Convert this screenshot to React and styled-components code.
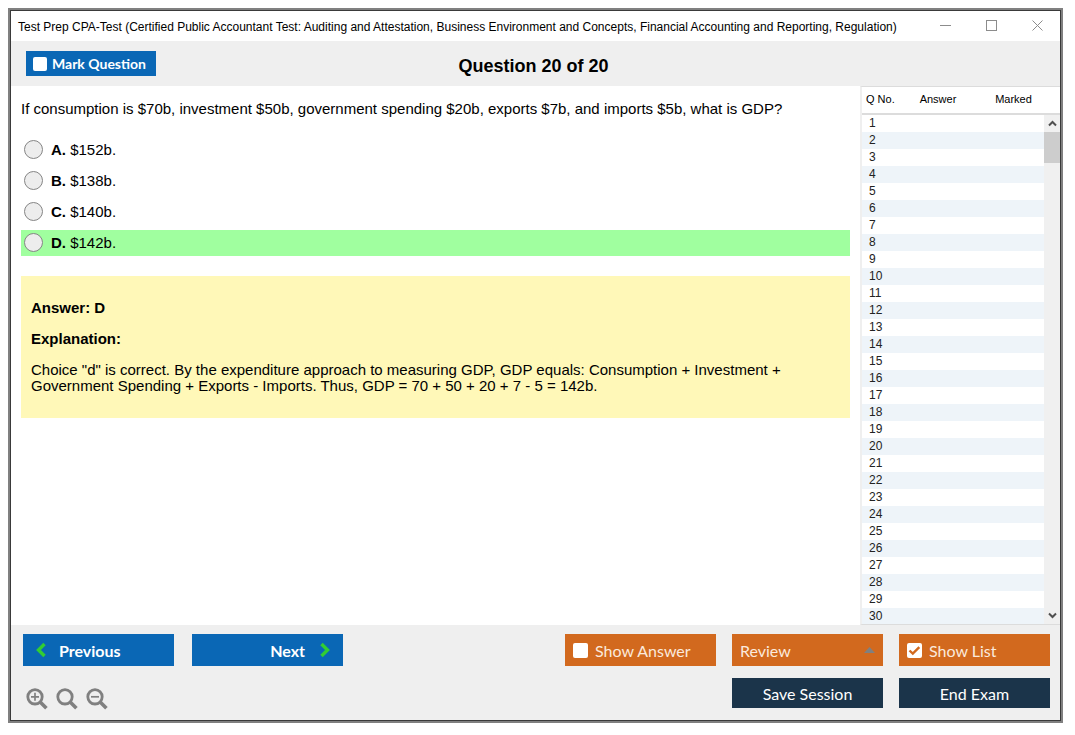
import React, { useState } from "react";
import styled, { createGlobalStyle } from "styled-components";

const GlobalStyle = createGlobalStyle`
  * {
    box-sizing: border-box;
  }

  body {
    margin: 0;
    padding: 8px 12px 12px 8px;
    background: #fff;
    color: #000;
    font-family: "Liberation Sans", Arial, sans-serif;
  }

  button, input {
    font: inherit;
    margin: 0;
  }
`;

const Window = styled.div`
  height: calc(100vh - 20px);
  display: flex;
  flex-direction: column;
  border: 2px solid #808080;
  outline: 1px solid #3a3a3a;
  outline-offset: -3px;
  padding: 1px;
  background: #efefef;
`;

const TitleBar = styled.header`
  flex: 0 0 30px;
  display: flex;
  align-items: center;
  justify-content: space-between;
  padding: 0 7px;
  background: #fff;
  font-size: 12px;
  line-height: 16px;
  white-space: nowrap;

  > span {
    padding-top: 2px;
  }
`;

const WindowControls = styled.div`
  display: flex;
  gap: 14px;

  button {
    width: 32px;
    height: 28px;
    padding: 0;
    border: 0;
    background: none;
  }

  svg {
    display: block;
    margin: 0 auto 2px;
  }
`;

const QuestionBar = styled.div`
  flex: 0 0 45px;
  display: grid;
  grid-template-columns: 1fr auto 1fr;
  align-items: center;
  padding: 0 19px 0 15px;

  h1 {
    margin: 0;
    padding-top: 4px;
    font-size: 18px;
    line-height: 20px;
  }
`;

const MarkLabel = styled.label`
  justify-self: start;
  display: flex;
  align-items: center;
  gap: 5px;
  width: 130px;
  height: 25px;
  padding: 0 7px;
  background: #0a67b5;
  color: #fff;
  font: bold 14px Lato, sans-serif;
  white-space: nowrap;
`;

const CheckBox = styled.span`
  display: grid;
  flex: none;
  width: ${props => props.$size}px;
  height: ${props => props.$size}px;

  input,
  svg {
    grid-area: 1 / 1;
    width: 100%;
    height: 100%;
  }

  input {
    appearance: none;
    border-radius: 2px;
    background: #fff;
  }

  svg {
    pointer-events: none;
  }
`;

const Main = styled.main`
  flex: 1;
  min-height: 0;
  display: flex;
  background: #fff;
`;

const QuestionPane = styled.section`
  flex: 1;
  padding: 15px 10px 0;
  font-size: 15px;
  line-height: 16px;

  > p {
    margin: 0 0 20px;
  }
`;

const Options = styled.div`
  display: flex;
  flex-direction: column;
  gap: 5px;
  margin-bottom: 20px;
`;

const Option = styled.label`
  display: flex;
  align-items: center;
  height: 26px;
  padding: 0 3px;
  background: ${props => (props.$correct ? "#a0ff9f" : "transparent")};

  input {
    appearance: none;
    width: 19px;
    height: 19px;
    margin: 0 8px 1px 0;
    border: 1px solid #858585;
    border-radius: 50%;
    background: #ededed;
  }

  input:checked {
    box-shadow: inset 0 0 0 4px #ededed;
    background: #333;
  }
`;

const Explanation = styled.div`
  padding: 24px 10px;
  background: #fff8b8;

  p {
    margin: 0 0 15px;
  }

  p:last-child {
    margin: 0;
  }
`;

const ListPane = styled.aside`
  flex: 0 0 200px;
  display: flex;
  border: 1px solid #dcdcdc;
  border-width: 1px 0;
  border-left: 2px solid #efefef;
  color: #222;
  font-size: 12px;
`;

const ListTable = styled.table`
  width: 100%;
  border-collapse: collapse;
  table-layout: fixed;

  th {
    height: 27px;
    padding: 0 0 2px;
    border-bottom: 2px solid #dcdcdc;
    font-size: 11px;
    font-weight: normal;
    color: #000;
  }

  th:first-child {
    width: 45px;
    padding-left: 4px;
    text-align: left;
  }

  th:nth-child(2) {
    width: 62px;
  }

  th:last-child {
    padding-left: 14px;
  }

  td {
    height: 17px;
    padding: 0 0 0 7px;
    line-height: 17px;
  }

  tbody tr:nth-child(even) {
    background: #eef4f9;
  }
`;

const Rows = styled.div`
  flex: 1;
  overflow: hidden;
`;

const ScrollTrack = styled.div`
  flex: 0 0 16px;
  display: flex;
  flex-direction: column;
  justify-content: space-between;
  margin-top: 26px;
  border-top: 2px solid #dcdcdc;
  background: #f0f0f0;

  button {
    display: block;
    width: 100%;
    height: 17px;
    padding: 0;
    border: 0;
    background: none;
  }

  svg {
    display: block;
    margin: auto;
  }
`;

const Thumb = styled.div`
  height: 31px;
  background: #cdcdcd;
`;

const Footer = styled.footer`
  flex: 0 0 95px;
  display: flex;
  justify-content: space-between;
  padding: 9px 10px 0 12px;
  font-family: Lato, sans-serif;
  font-size: 16px;
`;

const ButtonRow = styled.div`
  display: flex;
  justify-content: flex-end;
  gap: ${props => props.$gap}px;
`;

const FooterGroup = styled.div`
  display: flex;
  flex-direction: column;
  gap: 12px;
`;

const FooterButton = styled.button`
  width: 151px;
  height: 32px;
  padding: 0 8px;
  border: 0;
  color: #fff;
`;

const NavButton = styled(FooterButton)`
  display: flex;
  align-items: center;
  justify-content: ${props => (props.$end ? "flex-end" : "flex-start")};
  gap: ${props => (props.$end ? 14 : 12)}px;
  padding: 0 12px;
  background: #0a67b5;
  font-weight: bold;
`;

const ActionLabel = styled.label`
  display: flex;
  align-items: center;
  gap: 7px;
  width: 151px;
  height: 32px;
  padding: 0 8px;
  background: #d2691e;
  color: #fbe9dc;
`;

const ReviewButton = styled(FooterButton)`
  display: flex;
  align-items: center;
  justify-content: space-between;
  background: #d2691e;
  color: #fbe9dc;
`;

const DarkButton = styled(FooterButton)`
  height: 30px;
  background: #1b344a;
`;

const ZoomRow = styled.div`
  display: flex;
  gap: 8px;
  padding: 10px 3px 0;

  button {
    width: 22px;
    height: 22px;
    padding: 0;
    border: 0;
    background: none;
  }

  svg {
    display: block;
  }
`;

const options = [
  { letter: "A", text: "$152b." },
  { letter: "B", text: "$138b." },
  { letter: "C", text: "$140b." },
  { letter: "D", text: "$142b." }
];

const CORRECT = "D";
const rows = Array.from({ length: 30 }, (_, i) => i + 1);

const Check = ({ size, checked, onChange }) => (
  <CheckBox $size={size}>
    <input type="checkbox" checked={checked} onChange={onChange} />
    {checked && (
      <svg viewBox="0 0 15 15" fill="none" stroke="#d2691e" strokeWidth="2.4">
        <path d="M2.5 7.5 L5.8 10.6 L12.3 4.2" />
      </svg>
    )}
  </CheckBox>
);

const Chevron = ({ d }) => (
  <svg width="12" height="16" viewBox="0 0 12 16" fill="none" stroke="#32cd32" strokeWidth="3.4">
    <path d={d} />
  </svg>
);

const ScrollArrow = ({ d }) => (
  <svg width="9" height="7" viewBox="0 0 9 7" fill="none" stroke="#505050" strokeWidth="2">
    <path d={d} />
  </svg>
);

const Magnifier = ({ sign }) => (
  <svg width="22" height="22" viewBox="0 0 22 22" fill="none" stroke="#808080">
    <circle cx="9" cy="8.8" r="7.2" strokeWidth="2.8" />
    <path d="M13.9 13.7 L20.4 20.2" strokeWidth="3.6" />
    {sign && <path d={sign} strokeWidth="1.7" />}
  </svg>
);

function App() {
  const [marked, setMarked] = useState(false);
  const [showAnswer, setShowAnswer] = useState(false);
  const [showList, setShowList] = useState(true);

  return (
    <>
      <GlobalStyle />
      <Window>
        <TitleBar>
          <span>
            Test Prep CPA-Test (Certified Public Accountant Test: Auditing and
            Attestation, Business Environment and Concepts, Financial Accounting
            and Reporting, Regulation)
          </span>
          <WindowControls>
            <button type="button" aria-label="Minimize">
              <svg width="11" height="11" stroke="#8c8c8c">
                <path d="M0 5.5 H11" />
              </svg>
            </button>
            <button type="button" aria-label="Maximize">
              <svg width="11" height="11" stroke="#8c8c8c" fill="none">
                <rect x="0.5" y="0.5" width="10" height="10" />
              </svg>
            </button>
            <button type="button" aria-label="Close">
              <svg width="11" height="11" stroke="#8c8c8c">
                <path d="M0.5 0.5 L10.5 10.5 M10.5 0.5 L0.5 10.5" />
              </svg>
            </button>
          </WindowControls>
        </TitleBar>

        <QuestionBar>
          <MarkLabel>
            <Check size={14} checked={marked} onChange={() => setMarked(!marked)} />
            Mark Question
          </MarkLabel>
          <h1>Question 20 of 20</h1>
        </QuestionBar>

        <Main>
          <QuestionPane>
            <p>
              If consumption is $70b, investment $50b, government spending $20b,
              exports $7b, and imports $5b, what is GDP?
            </p>
            <Options>
              {options.map(option => (
                <Option key={option.letter} $correct={option.letter === CORRECT}>
                  <input type="radio" name="answer" value={option.letter} />
                  <span>
                    <b>{option.letter}.</b> {option.text}
                  </span>
                </Option>
              ))}
            </Options>
            <Explanation>
              <p>
                <b>Answer: {CORRECT}</b>
              </p>
              <p>
                <b>Explanation:</b>
              </p>
              <p>
                Choice "d" is correct. By the expenditure approach to measuring
                GDP, GDP equals: Consumption + Investment +<br />
                Government Spending + Exports - Imports. Thus, GDP = 70 + 50 +
                20 + 7 - 5 = 142b.
              </p>
            </Explanation>
          </QuestionPane>

          {showList && (
            <ListPane>
              <Rows>
                <ListTable>
                  <thead>
                    <tr>
                      <th>Q No.</th>
                      <th>Answer</th>
                      <th>Marked</th>
                    </tr>
                  </thead>
                  <tbody>
                    {rows.map(n => (
                      <tr key={n}>
                        <td>{n}</td>
                        <td />
                        <td />
                      </tr>
                    ))}
                  </tbody>
                </ListTable>
              </Rows>
              <ScrollTrack>
                <div>
                  <button type="button" aria-label="Scroll up">
                    <ScrollArrow d="M1 5.5 L4.5 2 L8 5.5" />
                  </button>
                  <Thumb />
                </div>
                <button type="button" aria-label="Scroll down">
                  <ScrollArrow d="M1 1.5 L4.5 5 L8 1.5" />
                </button>
              </ScrollTrack>
            </ListPane>
          )}
        </Main>

        <Footer>
          <FooterGroup>
            <ButtonRow $gap={18}>
              <NavButton type="button">
                <Chevron d="M9.5 2 L3.5 8 L9.5 14" />
                Previous
              </NavButton>
              <NavButton type="button" $end>
                Next
                <Chevron d="M2.5 2 L8.5 8 L2.5 14" />
              </NavButton>
            </ButtonRow>
            <ZoomRow>
              <button type="button" aria-label="Zoom in">
                <Magnifier sign="M5 8.8 H13 M9 4.8 V12.8" />
              </button>
              <button type="button" aria-label="Reset zoom">
                <Magnifier />
              </button>
              <button type="button" aria-label="Zoom out">
                <Magnifier sign="M5 8.8 H13" />
              </button>
            </ZoomRow>
          </FooterGroup>

          <FooterGroup>
            <ButtonRow $gap={16}>
              <ActionLabel>
                <Check
                  size={15}
                  checked={showAnswer}
                  onChange={() => setShowAnswer(!showAnswer)}
                />
                Show Answer
              </ActionLabel>
              <ReviewButton type="button" aria-haspopup="menu">
                Review
                <svg width="11" height="6">
                  <path d="M0 6 L5.5 0 L11 6 Z" fill="#808080" />
                </svg>
              </ReviewButton>
              <ActionLabel>
                <Check
                  size={15}
                  checked={showList}
                  onChange={() => setShowList(!showList)}
                />
                Show List
              </ActionLabel>
            </ButtonRow>
            <ButtonRow $gap={16}>
              <DarkButton type="button">Save Session</DarkButton>
              <DarkButton type="button">End Exam</DarkButton>
            </ButtonRow>
          </FooterGroup>
        </Footer>
      </Window>
    </>
  );
}

export default App;
